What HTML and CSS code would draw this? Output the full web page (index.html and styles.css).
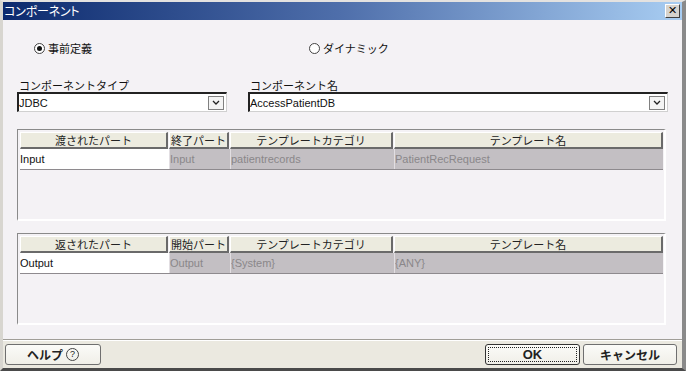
FILE: index.html
```html
<!DOCTYPE html>
<html lang="ja">
<head>
  <meta charset="UTF-8">
  <meta name="viewport" content="width=device-width, initial-scale=1.0">
  <title>コンポーネント</title>
  <link rel="stylesheet" href="styles.css">
</head>
<body>

  <div class="window">
    <div class="titlebar">
      <span class="title">コンポーネント</span>
      <button class="close-btn">&#x2715;</button>
    </div>

    <div class="content">
      <div class="radios">
        <label class="radio"><span class="dot checked"></span>事前定義</label>
        <label class="radio second"><span class="dot"></span>ダイナミック</label>
      </div>

      <div class="fields">
        <div class="field small">
          <div class="field-label">コンポーネントタイプ</div>
          <div class="combo">
            <span class="combo-text">JDBC</span>
            <span class="combo-arrow"><svg width="8" height="5" viewBox="0 0 8 5"><path d="M1 1 L4 4 L7 1" fill="none" stroke="#222" stroke-width="1.3"/></svg></span>
          </div>
        </div>
        <div class="field large">
          <div class="field-label">コンポーネント名</div>
          <div class="combo">
            <span class="combo-text">AccessPatientDB</span>
            <span class="combo-arrow"><svg width="8" height="5" viewBox="0 0 8 5"><path d="M1 1 L4 4 L7 1" fill="none" stroke="#222" stroke-width="1.3"/></svg></span>
          </div>
        </div>
      </div>

      <div class="table-box">
        <div class="grid-row head">
          <div class="th">渡されたパート</div>
          <div class="th">終了パート</div>
          <div class="th">テンプレートカテゴリ</div>
          <div class="th">テンプレート名</div>
        </div>
        <div class="grid-row data">
          <div class="td edit">Input</div>
          <div class="td">Input</div>
          <div class="td">patientrecords</div>
          <div class="td">PatientRecRequest</div>
        </div>
      </div>

      <div class="table-box">
        <div class="grid-row head">
          <div class="th">返されたパート</div>
          <div class="th">開始パート</div>
          <div class="th">テンプレートカテゴリ</div>
          <div class="th">テンプレート名</div>
        </div>
        <div class="grid-row data">
          <div class="td edit">Output</div>
          <div class="td">Output</div>
          <div class="td">{System}</div>
          <div class="td">{ANY}</div>
        </div>
      </div>
    </div>

    <div class="footer">
      <button class="btn help">ヘルプ <span class="qmark">?</span></button>
      <div class="spacer"></div>
      <button class="btn ok"><span class="focus">OK</span></button>
      <button class="btn cancel">キャンセル</button>
    </div>
  </div>

</body>
</html>
```

FILE: styles.css
```css
body {
  margin: 0;
  padding: 0;
  font-family: "Liberation Sans", "Noto Sans CJK JP", sans-serif;
  font-size: 11px;
  color: #111;
}

.window {
  box-sizing: border-box;
  width: 686px;
  height: 371px;
  display: flex;
  flex-direction: column;
  background: #f4f2f5;
  border-style: solid;
  border-width: 2px 4px 3px 3px;
  border-color: #e4e2e0 #8a8a8a #4a4a4a #d8d6d0;
}

.titlebar {
  height: 18px;
  display: flex;
  align-items: center;
  justify-content: space-between;
  padding: 0 2px 0 1px;
  background: linear-gradient(90deg, #0c2a6e, #4f6fab 50%, #a8cdf2);
}

.title {
  color: white;
  font-family: "Noto Sans CJK JP", sans-serif;
  font-size: 12px;
  font-feature-settings: "palt";
  letter-spacing: -0.2px;
  line-height: 18px;
}

.close-btn {
  width: 15px;
  height: 14px;
  padding: 0;
  font-family: "DejaVu Sans", sans-serif;
  font-size: 11px;
  font-weight: bold;
  line-height: 10px;
  color: #000;
  background: #d6d3ce;
  border: 1px solid;
  border-color: #fff #404040 #404040 #fff;
}

.content {
  flex: 1;
  padding: 21px 14px 0 14px;
  display: flex;
  flex-direction: column;
}

.radios {
  display: flex;
  height: 14px;
  align-items: center;
  padding-left: 17px;
}

.radio {
  display: flex;
  align-items: center;
  gap: 3px;
  font-family: "Noto Sans CJK JP", sans-serif;
  font-size: 11px;
}

.radio.second {
  margin-left: 217px;
}

.dot {
  box-sizing: border-box;
  width: 11px;
  height: 11px;
  border-radius: 50%;
  border: 1px solid #444;
  background: #fff;
  display: flex;
  align-items: center;
  justify-content: center;
}

.dot.checked::after {
  content: "";
  width: 5px;
  height: 5px;
  border-radius: 50%;
  background: #111;
}

.fields {
  display: flex;
  gap: 21px;
  margin-top: 23px;
}

.field.small {
  width: 210px;
}

.field.large {
  width: 420px;
}

.field-label {
  font-family: "Noto Sans CJK JP", sans-serif;
  font-size: 11px;
  line-height: 14px;
  padding-left: 2px;
}

.combo {
  box-sizing: border-box;
  height: 20px;
  display: flex;
  align-items: center;
  justify-content: space-between;
  background: #fff;
  border-style: solid;
  border-width: 2px 1px 1px 2px;
  border-color: #222 #d0d0d0 #d0d0d0 #222;
  padding: 0 2px 0 0;
}

.combo-text {
  font-size: 11px;
}

.combo-arrow {
  box-sizing: border-box;
  width: 16px;
  height: 14px;
  display: flex;
  align-items: center;
  justify-content: center;
  background: #f4f4f4;
  border: 1px solid #808080;
}

.table-box {
  box-sizing: border-box;
  height: 92px;
  margin-top: 17px;
  width: 649px;
  padding: 2px 1px 0 2px;
  border-style: solid;
  border-width: 1px 2px 2px 1px;
  border-color: #8a8a8a #fff #fff #8a8a8a;
}

.table-box + .table-box {
  margin-top: 12px;
}

.grid-row {
  display: grid;
  grid-template-columns: 149px 61px 164px 1fr;
}

.head {
  grid-template-columns: 148px 60px 163px 1fr;
  gap: 1px;
}

.th {
  box-sizing: border-box;
  height: 17px;
  background: #ecebdf;
  border-style: solid;
  border-width: 1px 2px 2px 1px;
  border-color: #fff #6a6a6a #6a6a6a #fff;
  text-align: center;
  font-family: "Noto Sans CJK JP", sans-serif;
  font-size: 11px;
  line-height: 14px;
  color: #222;
}

.data {
  border-bottom: 1px solid #8e8a8e;
}

.td {
  box-sizing: border-box;
  height: 20px;
  line-height: 20px;
  background: #c3bfc3;
  color: #8a878a;
  border-left: 1px solid #e2dee2;
  white-space: nowrap;
  overflow: hidden;
}

.td.edit {
  background: #fff;
  color: #111;
  border-left: none;
}

.footer {
  height: 28px;
  display: flex;
  align-items: center;
  padding: 0 5px 0 2px;
  gap: 3px;
  background: #ebe9e0;
  border-top: 1px solid #a09e98;
  box-shadow: inset 0 1px 0 #fff;
}

.spacer {
  flex: 1;
}

.btn {
  box-sizing: border-box;
  height: 21px;
  padding: 0;
  background: linear-gradient(#fbfbf8, #f0efe8);
  border: 1px solid #6f6f6f;
  border-radius: 3px;
  font-family: "Noto Sans CJK JP", sans-serif;
  font-size: 12px;
  font-weight: bold;
  color: #222;
  display: flex;
  align-items: center;
  justify-content: center;
}

.btn.help {
  width: 96px;
  gap: 3px;
}

.qmark {
  box-sizing: border-box;
  width: 13px;
  height: 13px;
  border: 1px solid #444;
  border-radius: 50%;
  font-family: "Liberation Sans", sans-serif;
  font-size: 9px;
  font-weight: normal;
  line-height: 11px;
  text-align: center;
}

.btn.ok {
  width: 95px;
  border-color: #333;
  font-family: "Liberation Sans", sans-serif;
  font-size: 13px;
}

.focus {
  box-sizing: border-box;
  width: 89px;
  height: 15px;
  border: 1px dotted #222;
  display: flex;
  align-items: center;
  justify-content: center;
}

.btn.cancel {
  width: 94px;
  font-size: 12px;
}
```
